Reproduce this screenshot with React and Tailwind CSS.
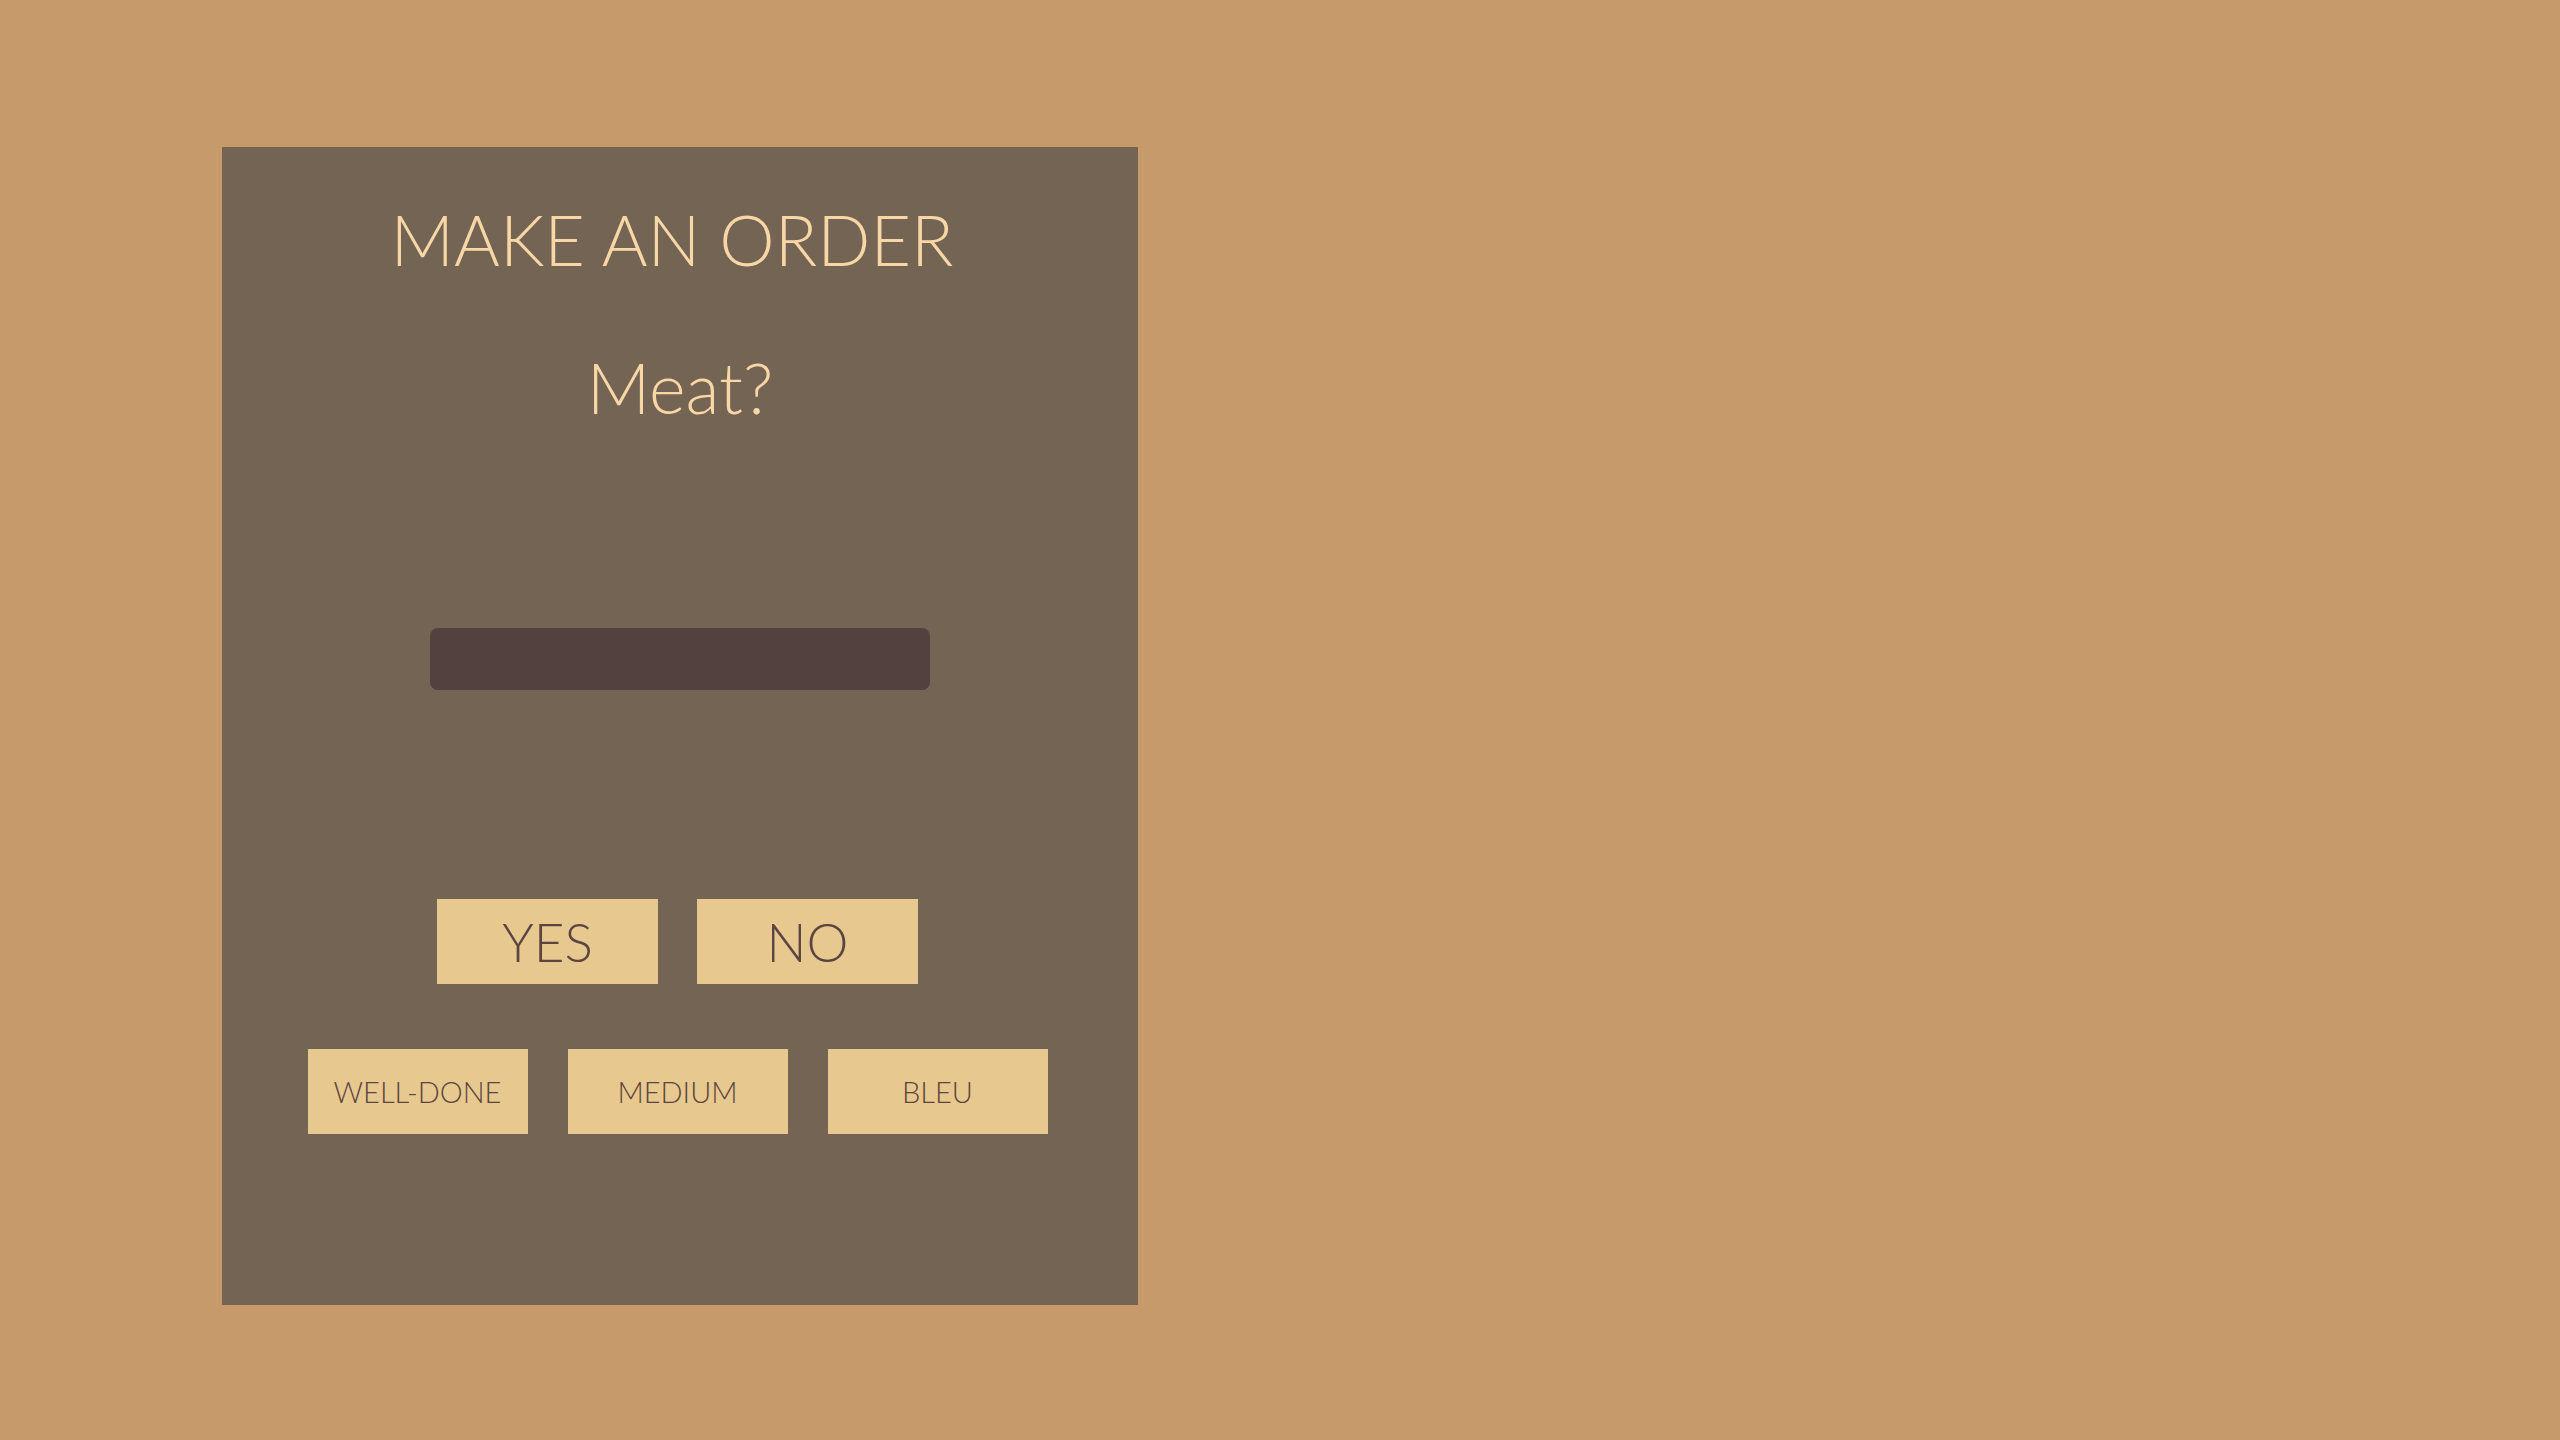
export default function App() {
  const font = { fontFamily: 'Lato, "Noto Sans", sans-serif' }
  return (
    <div className="min-h-[1440px] w-full bg-[#c69a6b] pt-[147px] pl-[222px]" style={font}>
      <div className="flex h-[1158px] w-[916px] flex-col items-center bg-[#736454]">
        <h1 className="mt-[50px] pr-[16px] text-[70px] font-light leading-[1.2] text-[#f9d6a6]">MAKE AN ORDER</h1>
        <p className="mt-[64px] text-[70px] font-light leading-[1.2] text-[#f9d6a6]">Meat?</p>
        <div className="mt-[199px] h-[62px] w-[500px] rounded-[8px] bg-[#534140]" />
        <div className="mt-[209px] flex gap-[39px] pr-[5px]">
          {['YES', 'NO'].map((t) => (
            <button key={t} className="flex h-[85px] w-[221px] items-center justify-center bg-[#e7c88f] text-[53px] font-light leading-none text-[#5a4540]">
              {t}
            </button>
          ))}
        </div>
        <div className="mt-[65px] flex gap-[40px] pr-[5px]">
          {['WELL-DONE', 'MEDIUM', 'BLEU'].map((t) => (
            <button key={t} className="flex h-[85px] w-[220px] items-center justify-center bg-[#e7c88f] text-[29px] font-light leading-none text-[#5a4540]">
              {t}
            </button>
          ))}
        </div>
      </div>
    </div>
  )
}
